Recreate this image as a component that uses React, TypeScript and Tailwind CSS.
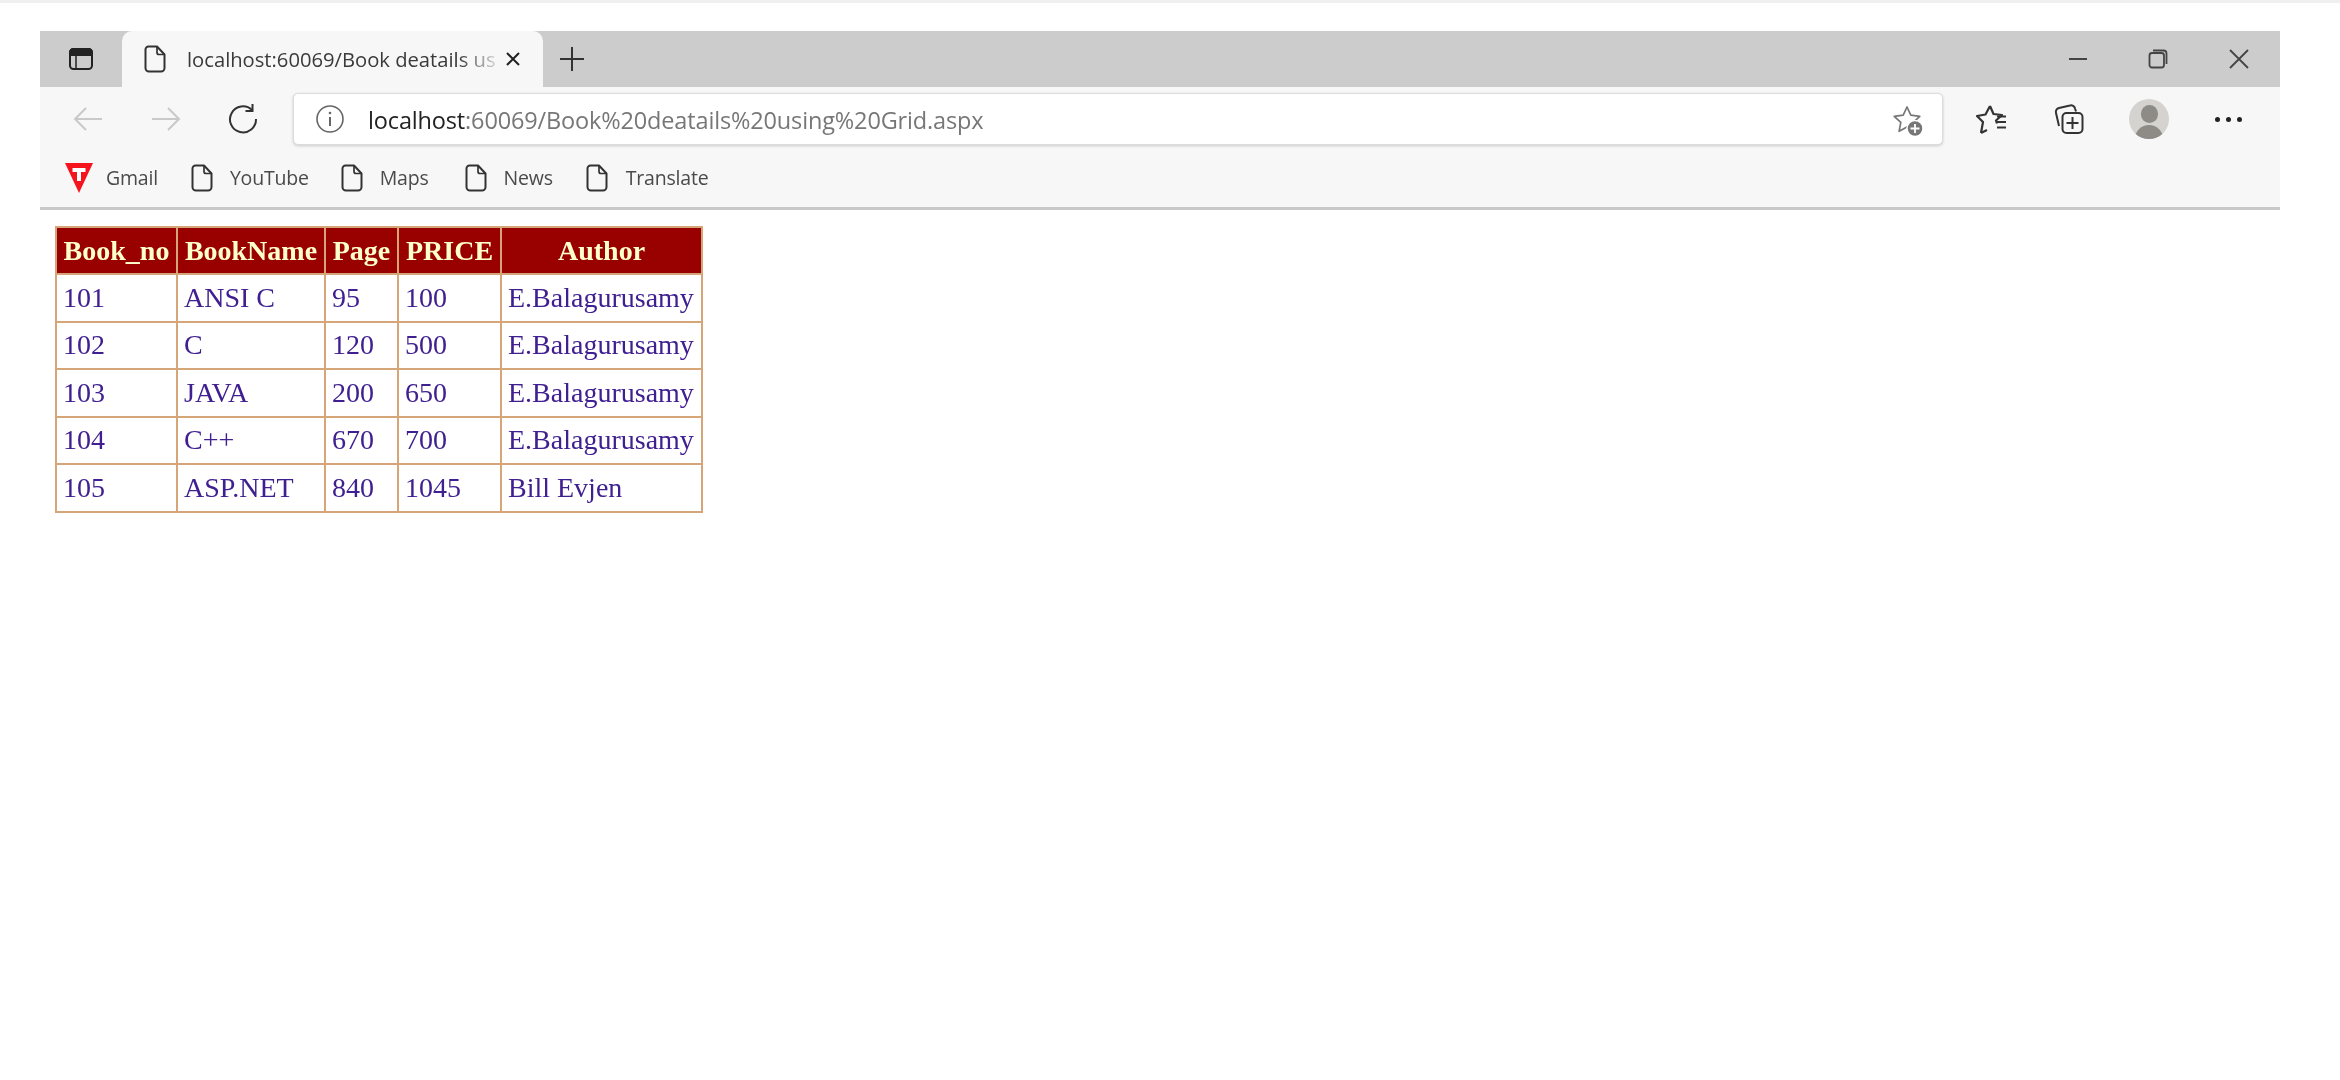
import React from "react";

const ui = "font-['Open_Sans','Noto_Sans',sans-serif]";

function FileIcon() {
  return (
    <svg width="22" height="28" viewBox="0 0 22 28" fill="none" stroke="#333" strokeWidth="2" strokeLinejoin="round">
      <path d="M4.500 1.500h8.500l7.500 8v13.500a3.500 3.500 0 0 1-3.500 3.500H5a3.500 3.500 0 0 1-3.500-3.500V4.500a3 3 0 0 1 3-3z" />
      <path d="M13 1.500v6a2 2 0 0 0 2 2h5.500" strokeWidth="1.700" />
    </svg>
  );
}

function Bookmark({ label, icon, className, labelClass }: { label: string; icon: React.ReactNode; className: string; labelClass: string }) {
  return (
    <div className={`flex items-center ${className}`}>
      <div className="h-[30px] flex items-center justify-center">{icon}</div>
      <span className={`${labelClass} text-[19.500px] leading-[28px] text-[#4a4a4a] tracking-[-0.2px]`}>{label}</span>
    </div>
  );
}

const rows = [
  ["101", "ANSI C", "95", "100", "E.Balagurusamy"],
  ["102", "C", "120", "500", "E.Balagurusamy"],
  ["103", "JAVA", "200", "650", "E.Balagurusamy"],
  ["104", "C++", "670", "700", "E.Balagurusamy"],
  ["105", "ASP.NET", "840", "1045", "Bill Evjen"],
];
const heads = ["Book_no", "BookName", "Page", "PRICE", "Author"];

export default function App() {
  return (
    <div className={`min-h-[1080px] w-[2340px] bg-white blur-[0.7px] ${ui}`}>
      <div className="h-[3px] bg-[#efefef]" />
      <div className="ml-[40px] mr-[60px] mt-[28px]">
        {/* Tab strip */}
        <div className="h-[56px] bg-[#cccccc] flex items-stretch">
          <div className="w-[82px] flex items-center justify-center">
            <svg width="26" height="26" viewBox="0 0 26 26" fill="none" stroke="#222" strokeWidth="2">
              <rect x="2" y="3" width="22" height="20" rx="3.500" />
              <path d="M2 6.500a3.500 3.500 0 0 1 3.500-3.500h15a3.500 3.500 0 0 1 3.500 3.500v2.500H2z" fill="#222" />
              <path d="M8 9v14" strokeWidth="1.500" />
            </svg>
          </div>
          <div className="w-[421px] bg-[#f7f7f7] rounded-t-[10px] flex items-center">
            <div className="ml-[22px]"><FileIcon /></div>
            <div className="ml-[21px] w-[308px] whitespace-nowrap text-[20.200px] text-[#3a3a3a] [mask-image:linear-gradient(to_right,black_88%,rgba(0,0,0,0.2))]">
              localhost:60069/Book deatails us
            </div>
            <svg className="ml-[9px]" width="18" height="18" viewBox="0 0 18 18" stroke="#222" strokeWidth="2"><path d="M3 3l12 12M15 3L3 15" /></svg>
          </div>
          <div className="ml-[15px] flex items-center">
            <svg width="28" height="28" viewBox="0 0 28 28" stroke="#333" strokeWidth="2"><path d="M14 2v24M2 14h24" /></svg>
          </div>
          <div className="ml-auto flex items-center">
            <svg width="20" height="20" viewBox="0 0 20 20" stroke="#444" strokeWidth="2"><path d="M1 10h18" /></svg>
            <svg className="ml-[60px]" width="20" height="20" viewBox="0 0 20 20" fill="none" stroke="#444" strokeWidth="1.800">
              <rect x="1.500" y="4" width="14.500" height="14.500" rx="2.500" />
              <path d="M5 1.500h10.500a3 3 0 0 1 3 3V15" />
            </svg>
            <svg className="ml-[60px] mr-[30px]" width="22" height="22" viewBox="0 0 22 22" stroke="#444" strokeWidth="1.800"><path d="M2 2l18 18M20 2L2 20" /></svg>
          </div>
        </div>

        {/* Toolbar */}
        <div className="h-[64px] bg-[#f7f7f7] flex items-center">
          <svg className="ml-[33px]" width="30" height="26" viewBox="0 0 30 26" fill="none" stroke="#c9c9c9" strokeWidth="2"><path d="M29 13H2M13 2L2 13l11 11" /></svg>
          <svg className="ml-[48px]" width="30" height="26" viewBox="0 0 30 26" fill="none" stroke="#c9c9c9" strokeWidth="2"><path d="M1 13h27M17 2l11 11-11 11" /></svg>
          <svg className="ml-[46px]" width="32" height="32" viewBox="0 0 32 32" fill="none" stroke="#333" strokeWidth="2">
            <path d="M25 7a13 13 0 1 0 4 9" />
            <path d="M25.500 1v7h-7" />
          </svg>
          <div className="ml-[34px] w-[1650px] h-[52px] bg-white rounded-[5px] border border-[#dcdcdc] shadow-[0_1px_3px_rgba(0,0,0,0.18)] flex items-center">
            <svg className="ml-[21px]" width="30" height="30" viewBox="0 0 30 30" fill="none" stroke="#666" strokeWidth="1.600">
              <circle cx="15" cy="15" r="13" />
              <path d="M15 13v9" strokeWidth="2" />
              <circle cx="15" cy="9" r="1.300" fill="#666" stroke="none" />
            </svg>
            <div className="ml-[23px] pt-[3px] text-[23.500px] tracking-[-0.15px] whitespace-nowrap">
              <span className="text-[#222]">localhost</span>
              <span className="text-[#777]">:60069/Book%20deatails%20using%20Grid.aspx</span>
            </div>
            <svg className="ml-auto mr-[16px] mt-[4px]" width="34" height="34" viewBox="0 0 34 34" fill="none">
              <path d="M15 3l3.800 8.200 9 1.100-6.600 6.100 1.700 8.900L15 23l-7.900 4.300 1.700-8.900L2.200 12.300l9-1.100z" stroke="#777" strokeWidth="1.700" strokeLinejoin="round" />
              <circle cx="23" cy="24.500" r="8" fill="#777" stroke="#fff" strokeWidth="1.500" />
              <path d="M23 20v9M18.500 24.500h9" stroke="#fff" strokeWidth="1.800" />
            </svg>
          </div>
          <svg className="ml-[33px]" width="32" height="32" viewBox="0 0 32 32" fill="none" stroke="#333" strokeWidth="2.200">
            <path d="M14 3l3.500 8 8.500 1-6 5.500 1 3M5 30l2-11-6-6 8.500-1.500L14 3M5 30l6-3" strokeLinejoin="round" />
            <path d="M21 13.500h9M21 19h9M21 24.500h9" />
          </svg>
          <div className="ml-[45px]">
            <svg width="32" height="32" viewBox="0 0 32 32" fill="none" stroke="#333" strokeWidth="2">
              <path d="M6 23l-3-13a4 4 0 0 1 3-5l11-2.500a4 4 0 0 1 5 3l1 3" />
              <rect x="9.500" y="10" width="20" height="20" rx="4" />
              <path d="M19.500 14v12M13.500 20h12" />
            </svg>
          </div>
          <div className="ml-[44px] w-[40px] h-[40px] rounded-full bg-[#d5d3d0] overflow-hidden flex flex-col items-center">
            <div className="mt-[6px] w-[17px] h-[19px] rounded-full bg-[#8e8b87]" />
            <div className="mt-[2px] w-[28px] h-[14px] rounded-t-full bg-[#8e8b87]" />
          </div>
          <div className="ml-[46px] flex gap-[6px]">
            <div className="w-[5px] h-[5px] rounded-full bg-[#222]" />
            <div className="w-[5px] h-[5px] rounded-full bg-[#222]" />
            <div className="w-[5px] h-[5px] rounded-full bg-[#222]" />
          </div>
        </div>

        {/* Bookmarks */}
        <div className="h-[59px] bg-[#f7f7f7] border-b-[3px] border-[#c9c9c9] flex items-center pb-[2px]">
          <Bookmark
            className="ml-[25px]"
            labelClass="ml-[13px]"
            label="Gmail"
            icon={
              <svg width="28" height="30" viewBox="0 0 28 30">
                <path d="M0 0h28L14 30z" fill="#f5141e" />
                <path d="M7.500 5h13v4h-4.500v9h-4V9H7.500z" fill="#fff" />
              </svg>
            }
          />
          <Bookmark className="ml-[33px]" labelClass="ml-[17px]" label="YouTube" icon={<FileIcon />} />
          <Bookmark className="ml-[32px]" labelClass="ml-[17px]" label="Maps" icon={<FileIcon />} />
          <Bookmark className="ml-[36px]" labelClass="ml-[17px]" label="News" icon={<FileIcon />} />
          <Bookmark className="ml-[33px]" labelClass="ml-[18px]" label="Translate" icon={<FileIcon />} />
        </div>
      </div>

      {/* Grid */}
      <div className="ml-[55px] mt-[16px] font-['Liberation_Serif',serif] text-[28px] leading-[30px] text-[#402090]">
        <table className="border-collapse border-2 border-[#d6a578] bg-white table-fixed w-[646px]">
          <colgroup>
            <col className="w-[121px]" />
            <col className="w-[148px]" />
            <col className="w-[73px]" />
            <col className="w-[103px]" />
            <col className="w-[201px]" />
          </colgroup>
          <thead>
            <tr className="h-[47px] bg-[#990000] text-[#ffffcc]">
              {heads.map((h) => (
                <th key={h} className="border-2 border-[#d6a578] font-bold text-center p-0 whitespace-nowrap">{h}</th>
              ))}
            </tr>
          </thead>
          <tbody>
            {rows.map((r) => (
              <tr key={r[0]} className="h-[47.500px]">
                {r.map((c, i) => (
                  <td key={i} className="border-2 border-[#d6a578] pl-[6px] p-0 whitespace-nowrap">{c}</td>
                ))}
              </tr>
            ))}
          </tbody>
        </table>
      </div>
    </div>
  );
}
